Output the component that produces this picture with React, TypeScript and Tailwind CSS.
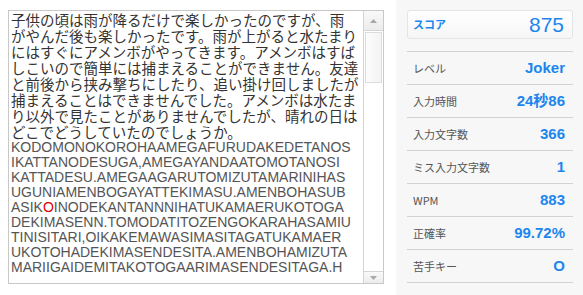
import React from 'react';

const JP_LINES = [
  '子供の頃は雨が降るだけで楽しかったのですが、雨',
  'がやんだ後も楽しかったです。雨が上がると水たまり',
  'にはすぐにアメンボがやってきます。アメンボはすば',
  'しこいので簡単には捕まえることができません。友達',
  'と前後から挟み撃ちにしたり、追い掛け回しましたが',
  '捕まえることはできませんでした。アメンボは水たま',
  'り以外で見たことがありませんでしたが、晴れの日は',
  'どこでどうしていたのでしょうか。',
];

const ROMA_LINES = [
  'KODOMONOKOROHAAMEGAFURUDAKEDETANOS',
  'IKATTANODESUGA,AMEGAYANDAATOMOTANOSI',
  'KATTADESU.AMEGAAGARUTOMIZUTAMARINIHAS',
  'UGUNIAMENBOGAYATTEKIMASU.AMENBOHASUB',
  'ASIKOINODEKANTANNNIHATUKAMAERUKOTOGA',
  'DEKIMASENN.TOMODATITOZENGOKARAHASAMIU',
  'TINISITARI,OIKAKEMAWASIMASITAGATUKAMAER',
  'UKOTOHADEKIMASENDESITA.AMENBOHAMIZUTA',
  'MARIIGAIDEMITAKOTOGAARIMASENDESITAGA.H',
];

const STATS = [
  { label: 'レベル', value: 'Joker' },
  { label: '入力時間', value: '24秒86' },
  { label: '入力文字数', value: '366' },
  { label: 'ミス入力文字数', value: '1' },
  { label: 'WPM', value: '883' },
  { label: '正確率', value: '99.72%' },
  { label: '苦手キー', value: 'O' },
];

const TextBox: React.FC = () => (
  <div className="ml-[8px] mt-[10px] flex h-[274px] w-[376px] border border-[#c8c8c8] bg-white">
    <div className="flex-1 overflow-hidden pl-[2px] pt-[1px]">
      <div className="text-[14.5px] leading-[16px] text-[#333] whitespace-nowrap" style={{ fontFamily: '"Noto Sans CJK JP", sans-serif' }}>
        {JP_LINES.map((l) => (
          <div key={l}>{l}</div>
        ))}
      </div>
      <div className="text-[14px] leading-[15px] text-[#555] whitespace-nowrap" style={{ fontFamily: '"Liberation Sans", Arial, sans-serif' }}>
        {ROMA_LINES.map((l, i) =>
          i === 4 ? (
            <div key={l}>
              ASIK<span className="text-[#e00000]">O</span>INODEKANTANNNIHATUKAMAERUKOTOGA
            </div>
          ) : (
            <div key={l}>{l}</div>
          )
        )}
      </div>
    </div>
    <div className="flex w-[20px] flex-col border-l border-[#d4d4d4] bg-white">
      <div className="flex h-[20px] items-center justify-center border-b border-[#d4d4d4] bg-gradient-to-b from-[#f9f9f9] to-[#ececec]">
        <svg width="7" height="4" viewBox="0 0 7 4"><path d="M3.5 0L7 4H0z" fill="#a8a8a8" /></svg>
      </div>
      <div className="flex-1 px-[1px] pt-[1px]">
        <div className="h-[51px] border border-[#dcdcdc] bg-gradient-to-r from-[#fdfdfd] to-[#f3f3f3]" />
      </div>
      <div className="flex h-[12px] items-start justify-center border-t border-[#d4d4d4] bg-gradient-to-b from-[#f9f9f9] to-[#ececec] pt-[4px]">
        <svg width="7" height="4" viewBox="0 0 7 4"><path d="M0 0H7L3.5 4z" fill="#a8a8a8" /></svg>
      </div>
    </div>
  </div>
);

const StatsPanel: React.FC = () => (
  <div className="ml-[12px] h-[295px] flex-1 bg-[#f7f7f7] pl-[11px] pr-[10px] pt-[10px]" style={{ fontFamily: '"Liberation Sans", "Noto Sans CJK JP", sans-serif' }}>
    <div className="flex h-[29px] items-center justify-between rounded-[3px] border border-[#e4e4e4] bg-gradient-to-b from-white to-[#f6f6f6] pl-[5px] pr-[8px]">
      <span className="text-[11px] font-bold text-[#1c86ee]" style={{ fontFamily: '"Noto Sans CJK JP", sans-serif' }}>スコア</span>
      <span className="text-[21px] leading-none text-[#1c86ee]">875</span>
    </div>
    <div className="mt-[12px] border-t border-[#d2d2d2]">
      {STATS.map((s) => (
        <div key={s.label} className="flex h-[33px] items-center justify-between border-b border-[#d2d2d2] pl-[6px] pr-[8px]">
          <span className="text-[11px] text-[#555]" style={{ fontFamily: '"Noto Sans CJK JP", sans-serif' }}>{s.label}</span>
          <span className="text-[15px] font-bold text-[#1c86ee]">{s.value}</span>
        </div>
      ))}
    </div>
  </div>
);

export default function App() {
  return (
    <div className="flex h-[295px] w-[583px] overflow-hidden bg-white">
      <TextBox />
      <StatsPanel />
    </div>
  );
}
